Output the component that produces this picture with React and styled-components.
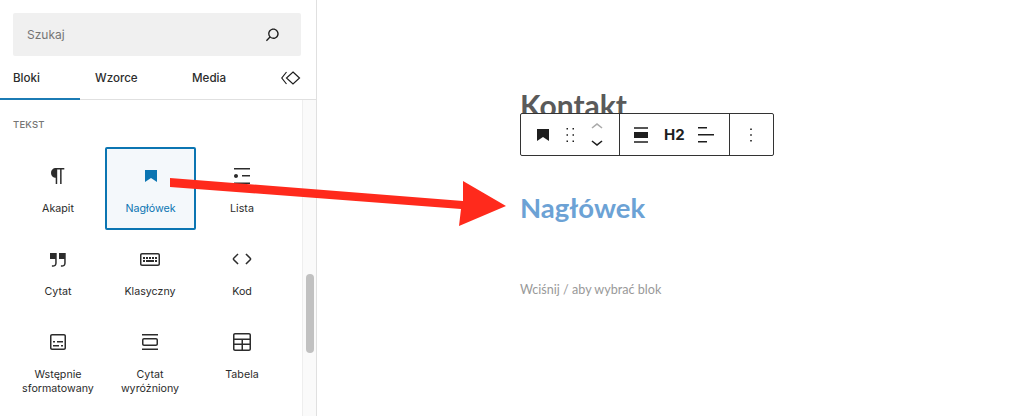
import styled, { createGlobalStyle } from "styled-components";

const GlobalStyle = createGlobalStyle`
  html, body {
    margin: 0;
    padding: 0;
    background: #fff;
  }
  #root {
    height: 416px;
    overflow: hidden;
  }
`;

const ICONS = {
  paragraph:
    "M18.3 4H9.9v-.1l-.9.2c-2.3.4-4 2.4-4 4.8s1.7 4.4 4 4.8l.7.1V20h1.5V5.5h2.9V20h1.5V5.5h2.7V4z",
  bookmark: "M6 6V18L12 14L18 18V6H6Z",
  list: "M4 4v1.5h16V4H4zm8 8.5h8V11h-8v1.5zM4 20h16v-1.5H4V20zm4-8c0-1.1-.9-2-2-2s-2 .9-2 2 .9 2 2 2 2-.9 2-2z",
  quote:
    "M13 6v6h5.2v4c0 .8-.2 1.4-.5 1.7-.6.6-1.6.6-2.5.5h-.3v1.5h.5c1 0 2.3-.1 3.3-1 .6-.6 1-1.6 1-2.8V6H13zm-9 6h5.2v4c0 .8-.2 1.4-.5 1.7-.6.6-1.6.6-2.5.5h-.3v1.5h.5c1 0 2.3-.1 3.3-1 .6-.6 1-1.6 1-2.8V6H4v6z",
  classic:
    "M20 6H4c-1.1 0-2 .9-2 2v9c0 1.1.9 2 2 2h16c1.1 0 2-.9 2-2V8c0-1.1-.9-2-2-2zm.5 11c0 .3-.2.5-.5.5H4c-.3 0-.5-.2-.5-.5V8c0-.3.2-.5.5-.5h16c.3 0 .5.2.5.5v9zM10 10H8v2h2v-2zm-5 2h2v-2H5v2zm8-2h-2v2h2v-2zm-5 5h8v-2H8v2zm6-3h2v-2h-2v2zm3 0h2v-2h-2v2zm0 3h2v-2h-2v2zM5 15h2v-2H5v2z",
  code: "M20.8 10.7l-4.3-4.3-1.1 1.1 4.3 4.3c.1.1.1.3 0 .4l-4.3 4.3 1.1 1.1 4.3-4.3c.7-.8.7-1.9 0-2.6zM4.2 11.8l4.3-4.3-1-1-4.3 4.3c-.7.7-.7 1.8 0 2.5l4.3 4.3 1.1-1.1-4.3-4.3c-.2-.1-.2-.3-.1-.4z",
  preformatted:
    "M18 4H6c-1.1 0-2 .9-2 2v12c0 1.1.9 2 2 2h12c1.1 0 2-.9 2-2V6c0-1.1-.9-2-2-2zm.5 14c0 .3-.2.5-.5.5H6c-.3 0-.5-.2-.5-.5V6c0-.3.2-.5.5-.5h12c.3 0 .5.2.5.5v12zM7 16.5h6V15H7v1.5zm4-4h6V11h-6v1.5zM9 11H7v1.5h2V11zm6 5.5h2V15h-2v1.5z",
  pullquote:
    "M18 8H6c-1.1 0-2 .9-2 2v4c0 1.1.9 2 2 2h12c1.1 0 2-.9 2-2v-4c0-1.1-.9-2-2-2zm.5 6c0 .3-.2.5-.5.5H6c-.3 0-.5-.2-.5-.5v-4c0-.3.2-.5.5-.5h12c.3 0 .5.2.5.5v4zM4 4v1.5h16V4H4zm0 16h16v-1.5H4V20z",
  table:
    "M19 3H5c-1.1 0-2 .9-2 2v14c0 1.1.9 2 2 2h14c1.1 0 2-.9 2-2V5c0-1.1-.9-2-2-2zM5 4.5h14c.3 0 .5.2.5.5v3.5h-15V5c0-.3.2-.5.5-.5zm8 5.5h6.5v3.5H13V10zm-1.5 3.5h-7V10h7v3.5zm-7 5.5v-4h7v4.5H5c-.3 0-.5-.2-.5-.5zm14.5.5h-6V15h6.5v4c0 .3-.2.5-.5.5z",
  search:
    "M13 5c-3.3 0-6 2.7-6 6 0 1.4.5 2.7 1.3 3.7l-3.8 3.8 1.1 1.1 3.8-3.8c1 .8 2.3 1.3 3.7 1.3 3.3 0 6-2.7 6-6S16.3 5 13 5zm0 10.5c-2.5 0-4.5-2-4.5-4.5s2-4.5 4.5-4.5 4.5 2 4.5 4.5-2 4.5-4.5 4.5z",
  drag: "M8.5 6.5h1.5V5H8.5v1.5zm0 6.25h1.5v-1.5H8.5v1.5zm0 6.25h1.5v-1.5H8.5V19zm6-14v1.5H16V5h-1.5zm0 7.75H16v-1.5h-1.5v1.5zm0 6.25H16v-1.5h-1.5V19z",
  chevronUp: "M6.5 12.4L12 8l5.5 4.4-.9 1.2L12 10l-4.5 3.6-1-1.2z",
  chevronDown: "M17.5 11.6L12 16l-5.5-4.4.9-1.2L12 14l4.5-3.6 1 1.2z",
  more: "M12.8 18.5h-1.6v-1.6h1.6v1.6zm0-5.7h-1.6v-1.6h1.6v1.6zm0-5.7h-1.6V5.5h1.6v1.6z",
  alignNone: "M5 15h14V9H5v6zm0 4.8h14v-1.5H5v1.5zM5 4.2v1.5h14V4.2H5z",
  alignLeft: "M13 5.5H4V4h9v1.5Zm7 7H4V11h16v1.5Zm-7 7H4V18h9v1.5Z",
};

const BLOCKS = [
  { icon: "paragraph", label: "Akapit" },
  { icon: "bookmark", label: "Nagłówek", selected: true },
  { icon: "list", label: "Lista" },
  { icon: "quote", label: "Cytat" },
  { icon: "classic", label: "Klasyczny" },
  { icon: "code", label: "Kod" },
  { icon: "preformatted", label: "Wstępnie sformatowany" },
  { icon: "pullquote", label: "Cytat wyróżniony" },
  { icon: "table", label: "Tabela" },
];

const Icon = ({ name, size = 24, color = "currentColor" }) => (
  <svg width={size} height={size} viewBox="0 0 24 24" fill={color}>
    <path d={ICONS[name]} />
  </svg>
);

const App = () => (
  <Page>
    <GlobalStyle />
    <Sidebar>
      <SearchBox>
        <SearchText>Szukaj</SearchText>
        <Icon name="search" size={21} color="#1e1e1e" />
      </SearchBox>
      <Tabs>
        <Tab $active>Bloki</Tab>
        <Tab>Wzorce</Tab>
        <Tab>Media</Tab>
        <TabIcon>
          <svg width="20" height="16" viewBox="0 0 20 16" fill="none" stroke="#1e1e1e" strokeWidth="1.2">
            <path d="M5.5 2 L0.8 8 L5.5 14" />
            <path d="M12 2 L18.5 8 L12 14 L5.5 8 Z" />
          </svg>
        </TabIcon>
      </Tabs>
      <ScrollArea>
        <BlockColumn>
          <SectionLabel>TEKST</SectionLabel>
          <BlockGrid>
            {BLOCKS.map((block) => (
              <BlockItem key={block.label} $selected={block.selected}>
                <Icon name={block.icon} size={24} />
                <BlockLabel>{block.label}</BlockLabel>
              </BlockItem>
            ))}
          </BlockGrid>
        </BlockColumn>
        <ScrollTrack>
          <ScrollThumb />
        </ScrollTrack>
      </ScrollArea>
    </Sidebar>
    <Canvas>
      <Title>Kontakt</Title>
      <Toolbar>
        <ToolGroup $width={99} $gap={3} $left={10}>
          <Icon name="bookmark" size={24} color="#1e1e1e" />
          <Icon name="drag" size={24} color="#1e1e1e" />
          <Movers>
            <Icon name="chevronUp" size={24} color="#aaa" />
            <Icon name="chevronDown" size={24} color="#1e1e1e" />
          </Movers>
        </ToolGroup>
        <ToolGroup $width={110} $gap={10} $left={9}>
          <Icon name="alignNone" size={24} color="#1e1e1e" />
          <LevelText>H2</LevelText>
          <Icon name="alignLeft" size={24} color="#1e1e1e" />
        </ToolGroup>
        <ToolGroup $width={43} $gap={0} $left={9}>
          <Icon name="more" size={24} color="#1e1e1e" />
        </ToolGroup>
      </Toolbar>
      <Heading>Nagłówek</Heading>
      <Placeholder>Wciśnij / aby wybrać blok</Placeholder>
    </Canvas>
    <Arrow width="1024" height="416" viewBox="0 0 1024 416">
      <polygon
        points="170,178 463,201 463,181 506,206 459,226 461,209 170,187"
        fill="#ff2a1c"
      />
    </Arrow>
  </Page>
);

export default App;

const Page = styled.div`
  position: relative;
  display: flex;
  width: 1024px;
  height: 416px;
  overflow: hidden;
  background: #fff;
  font-family: "Inter", "Liberation Sans", sans-serif;
`;

const Sidebar = styled.div`
  display: flex;
  flex-direction: column;
  width: 316px;
  height: 416px;
  flex-shrink: 0;
  border-right: 1px solid #e0e0e0;
  padding-top: 13px;
`;

const SearchBox = styled.div`
  display: flex;
  align-items: center;
  justify-content: space-between;
  height: 43px;
  margin: 0 15px 0 13px;
  padding: 0 18px 0 14px;
  background: #f0f0f0;
  border-radius: 2px;
`;

const SearchText = styled.span`
  font-size: 12px;
  color: #757575;
`;

const Tabs = styled.div`
  position: relative;
  display: flex;
  height: 43px;
  flex-shrink: 0;
  border-bottom: 1px solid #e0e0e0;
`;

const Tab = styled.div`
  display: flex;
  align-items: center;
  width: ${(p) => (p.$active ? "80px" : "97px")};
  padding: ${(p) => (p.$active ? "2px 0 0 13px" : "2px 0 0 15px")};
  box-sizing: border-box;
  height: 44px;
  font-size: 11.6px;
  font-weight: 500;
  color: #2c2c2c;
  border-bottom: 2px solid ${(p) => (p.$active ? "#1b7bb4" : "transparent")};
`;

const TabIcon = styled.div`
  display: flex;
  align-items: center;
  height: 44px;
  margin-left: 7px;
`;

const ScrollArea = styled.div`
  display: flex;
  flex: 1;
  min-height: 0;
`;

const BlockColumn = styled.div`
  flex: 1;
  min-width: 0;
  padding: 18px 14px 0 12px;
`;

const SectionLabel = styled.div`
  height: 13px;
  line-height: 13px;
  padding-left: 1px;
  font-size: 9.5px;
  font-weight: 500;
  letter-spacing: 0.2px;
  color: #757575;
`;

const BlockGrid = styled.div`
  display: grid;
  grid-template-columns: repeat(3, 92px);
  grid-auto-rows: 83px;
  margin-top: 16px;
`;

const BlockItem = styled.div`
  display: flex;
  flex-direction: column;
  align-items: center;
  box-sizing: border-box;
  padding-top: ${(p) => (p.$selected ? "15px" : "17px")};
  color: ${(p) => (p.$selected ? "#0b75b2" : "#2c2c2c")};
  background: ${(p) => (p.$selected ? "#f4f8fb" : "transparent")};
  border: ${(p) => (p.$selected ? "2px solid #0b75b2" : "none")};
  border-radius: 2px;
  margin-left: ${(p) => (p.$selected ? "1px" : "0")};
`;

const BlockLabel = styled.div`
  margin-top: 14px;
  width: 84px;
  font-size: 10.7px;
  line-height: 14px;
  text-align: center;
`;

const ScrollTrack = styled.div`
  width: 14px;
  flex-shrink: 0;
  background: #fafafa;
  border-left: 1px solid #eeeeee;
  box-sizing: border-box;
  padding: 174px 2px 0 3px;
`;

const ScrollThumb = styled.div`
  height: 79px;
  background: #c1c1c1;
  border-radius: 4px;
`;

const Canvas = styled.div`
  position: relative;
  flex: 1;
  padding: 87px 0 0 203px;
`;

const Title = styled.h1`
  margin: 0;
  height: 36px;
  font-family: "Lato", sans-serif;
  font-size: 30px;
  line-height: 36px;
  font-weight: 700;
  color: #5a5a5a;
`;

const Toolbar = styled.div`
  position: absolute;
  left: 203px;
  top: 113px;
  display: flex;
  height: 43px;
  box-sizing: border-box;
  background: #fff;
  border: 1px solid #333;
  border-radius: 2px;
`;

const ToolGroup = styled.div`
  display: flex;
  align-items: center;
  gap: ${(p) => p.$gap}px;
  box-sizing: border-box;
  width: ${(p) => p.$width}px;
  padding-left: ${(p) => p.$left}px;
  border-right: 1px solid #333;

  &:last-child {
    border-right: none;
  }
`;

const Movers = styled.div`
  display: flex;
  flex-direction: column;
  height: 36px;
  justify-content: center;

  svg {
    display: block;
    margin: -4.5px 0;
  }
`;

const LevelText = styled.span`
  margin-left: 1px;
  margin-right: -1px;
  font-family: "Inter", sans-serif;
  font-size: 15px;
  font-weight: 700;
  color: #1e1e1e;
`;

const Heading = styled.h2`
  margin: 67px 0 0;
  font-family: "Lato", sans-serif;
  font-size: 27.5px;
  line-height: 36px;
  font-weight: 700;
  color: #6ca2d5;
`;

const Placeholder = styled.p`
  margin: 55px 0 0;
  font-family: "Lato", sans-serif;
  font-size: 12.6px;
  line-height: 18px;
  color: #999;
`;

const Arrow = styled.svg`
  position: absolute;
  left: 0;
  top: 0;
  pointer-events: none;
`;
